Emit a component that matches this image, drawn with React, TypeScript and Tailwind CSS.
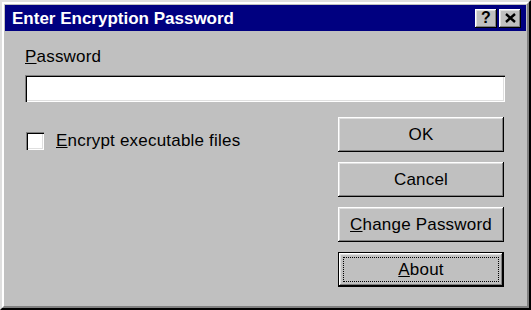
import { ReactNode } from "react";

const bevel =
  "shadow-[inset_-1px_-1px_#000,inset_1px_1px_#fff,inset_-2px_-2px_#808080,inset_2px_2px_#dfdfdf]";

const sunken =
  "shadow-[inset_1px_1px_#808080,inset_2px_2px_#000,inset_-1px_-1px_#fff,inset_-2px_-2px_#dfdfdf]";

const TitleButton = ({ children }: { children: ReactNode }) => (
  <div
    className={`flex h-[19px] w-[22px] items-center justify-center bg-[#c0c0c0] text-[16px] font-bold leading-none text-black ${bevel}`}
  >
    {children}
  </div>
);

const DialogButton = ({ children, focused }: { children: ReactNode; focused?: boolean }) => {
  if (focused) {
    return (
      <div className="h-[35px] w-full border border-black bg-[#c0c0c0]">
        <div className={`flex h-full w-full items-center justify-center p-[4px] ${bevel}`}>
          <div className="flex h-full w-full items-center justify-center border border-dotted border-black">
            {children}
          </div>
        </div>
      </div>
    );
  }
  return (
    <div className={`flex h-[35px] w-full items-center justify-center bg-[#c0c0c0] ${bevel}`}>
      {children}
    </div>
  );
};

export default function App() {
  return (
    <div
      className="h-[310px] w-[531px] border-t-2 border-l-2 border-t-[#dfdfdf] border-l-[#dfdfdf] border-r-2 border-b-2 border-r-black border-b-black bg-[#c0c0c0] text-[17px] leading-[19px] tracking-[0.2px] text-black"
      style={{ fontFamily: '"Liberation Sans", Arial, sans-serif' }}
    >
      <div className="flex h-full flex-col border-t-2 border-l-2 border-t-white border-l-white border-r-2 border-b-2 border-r-[#808080] border-b-[#808080] p-px">
        {/* title bar */}
        <div className="flex h-[26px] items-center justify-between bg-[#000080] pl-[7px] pr-[5px]">
          <span className="text-[17px] font-bold tracking-normal text-white">Enter Encryption Password</span>
          <div className="flex gap-[2px]">
            <TitleButton>?</TitleButton>
            <TitleButton>
              <svg width="11" height="10" viewBox="0 0 11 10">
                <path d="M1 1 L10 9 M10 1 L1 9" stroke="#000" strokeWidth="2.4" />
              </svg>
            </TitleButton>
          </div>
        </div>

        {/* body */}
        <div className="pl-[20px] pr-[19px] pt-[16px]">
          <div>
            <span className="underline">P</span>assword
          </div>
          <div className={`mt-[9px] h-[27px] w-[480px] bg-white ${sunken}`} />

          <div className="mt-[15px] flex items-start justify-between pr-[3px]">
            <div className="mt-[14px] flex items-center gap-[12px] pl-[1px]">
              <div className={`h-[18px] w-[18px] bg-white ${sunken}`} />
              <span>
                <span className="underline">E</span>ncrypt executable files
              </span>
            </div>
            <div className="flex w-[166px] flex-col gap-[10px]">
              <DialogButton>OK</DialogButton>
              <DialogButton>Cancel</DialogButton>
              <DialogButton>
                <span>
                  <span className="underline">C</span>hange Password
                </span>
              </DialogButton>
              <DialogButton focused>
                <span>
                  <span className="underline">A</span>bout
                </span>
              </DialogButton>
            </div>
          </div>
        </div>
      </div>
    </div>
  );
}
